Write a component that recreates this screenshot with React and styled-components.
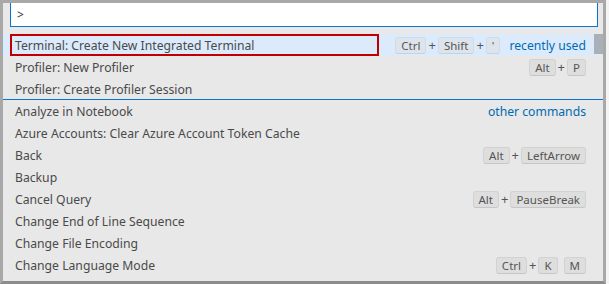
import React from "react";
import styled, { createGlobalStyle } from "styled-components";

const GlobalStyle = createGlobalStyle`
  html, body { margin: 0; padding: 0; background: #f4f4f4; }
  body { font-family: "Noto Sans", "Open Sans", sans-serif; }
`;

const Frame = styled.div`
  position: relative;
  box-sizing: border-box;
  width: 606px;
  height: 284px;
  border: 3px solid #a8a8a8;
  border-bottom-color: #8c8c8c;
  background: #e8e8e8;
  display: flex;
  flex-direction: column;
  overflow: hidden;
`;

const InputWrap = styled.div`
  padding: 0 5px 0 7px;
`;

const Input = styled.div`
  box-sizing: border-box;
  height: 24px;
  background: #ffffff;
  border: 1px solid #0a74d0;
  border-top: none;
  display: flex;
  align-items: center;
  padding-left: 6px;
  font-size: 12px;
  color: #333;
`;

const List = styled.div`
  position: relative;
  margin-top: 7px;
`;

const Row = styled.div`
  position: relative;
  box-sizing: border-box;
  height: 22px;
  display: flex;
  align-items: center;
  padding: 0 17px 0 12px;
  font-size: 12.2px;
  color: #4a4a4a;
  background: ${(p) => (p.$active ? "#dcebfc" : "transparent")};
  ${(p) =>
    p.$separator &&
    `
    &::before {
      content: "";
      position: absolute;
      left: 0;
      right: 0;
      top: -1px;
      height: 1px;
      background: #0a74d0;
    }
  `}
`;

const Label = styled.span`
  flex: 1;
  white-space: nowrap;
`;

const Keys = styled.span`
  display: flex;
  align-items: center;
  font-size: 11.5px;
  color: #555;
`;

const Key = styled.span`
  box-sizing: border-box;
  height: 17px;
  display: inline-flex;
  align-items: center;
  padding: 0 5px;
  margin: 0 1px;
  border-radius: 3px;
  background: ${(p) => (p.$active ? "#dde4ec" : "#dedede")};
  border: 1px solid ${(p) => (p.$active ? "#d3dce6" : "#d2d2d2")};
  border-bottom-color: ${(p) => (p.$active ? "#c9d1da" : "#c6c6c6")};
  &:last-child { margin-right: 0; }
`;

const Plus = styled.span`
  font-size: 13px;
  color: #555;
  margin: 0 1px;
`;

const ChordGap = styled.span`
  width: 4px;
`;

const Badge = styled.span`
  margin-left: 9px;
  color: #006ab1;
  font-size: 12.2px;
  white-space: nowrap;
`;

const Highlight = styled.div`
  position: absolute;
  left: 7px;
  top: 0;
  width: 369px;
  height: 22px;
  box-sizing: border-box;
  border: 2px solid #c00000;
  pointer-events: none;
`;

const Scrollbar = styled.div`
  position: absolute;
  right: 0;
  top: 0;
  width: 9px;
  height: 20px;
  background: #aab0b7;
`;

const items = [
  { label: "Terminal: Create New Integrated Terminal", keys: [["Ctrl", "Shift", "'"]], badge: "recently used", active: true },
  { label: "Profiler: New Profiler", keys: [["Alt", "P"]] },
  { label: "Profiler: Create Profiler Session" },
  { label: "Analyze in Notebook", badge: "other commands", separator: true },
  { label: "Azure Accounts: Clear Azure Account Token Cache" },
  { label: "Back", keys: [["Alt", "LeftArrow"]] },
  { label: "Backup" },
  { label: "Cancel Query", keys: [["Alt", "PauseBreak"]] },
  { label: "Change End of Line Sequence" },
  { label: "Change File Encoding" },
  { label: "Change Language Mode", keys: [["Ctrl", "K"], ["M"]] },
];

function Chords({ chords, active }) {
  return (
    <Keys>
      {chords.map((chord, ci) => (
        <React.Fragment key={ci}>
          {ci > 0 && <ChordGap />}
          {chord.map((k, i) => (
            <React.Fragment key={i}>
              {i > 0 && <Plus>+</Plus>}
              <Key $active={active}>{k}</Key>
            </React.Fragment>
          ))}
        </React.Fragment>
      ))}
    </Keys>
  );
}

export default function App() {
  return (
    <>
      <GlobalStyle />
      <Frame>
        <InputWrap>
          <Input>&gt;</Input>
        </InputWrap>
        <List>
          {items.map((it, i) => (
            <Row key={i} $active={it.active} $separator={it.separator}>
              <Label>{it.label}</Label>
              {it.keys && <Chords chords={it.keys} active={it.active} />}
              {it.badge && <Badge>{it.badge}</Badge>}
              {it.active && <Highlight />}
            </Row>
          ))}
          <Scrollbar />
        </List>
      </Frame>
    </>
  );
}
